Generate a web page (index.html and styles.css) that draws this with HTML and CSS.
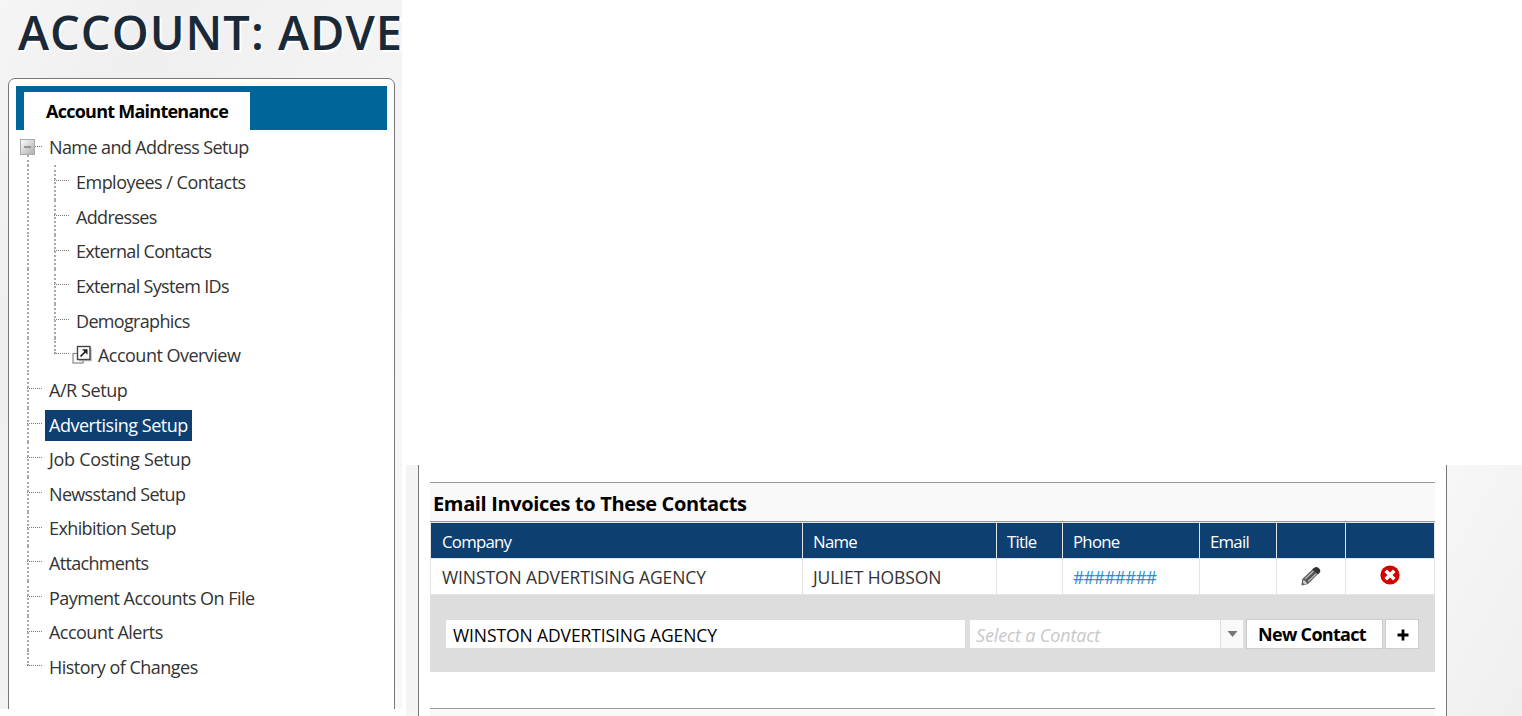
FILE: index.html
```
<!DOCTYPE html>
<html lang="en">
<head>
<meta charset="utf-8">
<title>Account Maintenance</title>
<link rel="stylesheet" href="styles.css">
</head>
<body>
<aside class="side">
  <h1 class="title">ACCOUNT: ADVE</h1>
  <nav class="panel">
    <div class="tabs"><div class="tab">Account Maintenance</div></div>
    <ul class="tree">
      <li class="node root"><svg class="toggle" viewBox="0 0 15 16"><defs><linearGradient id="g" x1="0" y1="0" x2="1" y2="1"><stop offset="0" stop-color="#fff"/><stop offset="1" stop-color="#aaa"/></linearGradient></defs><rect x=".5" y=".5" width="14" height="15" fill="url(#g)" stroke="#aaa"/><path d="M4 8h7" stroke="#777" stroke-width="1.4"/></svg><span class="label snug">Name and Address Setup</span></li>
      <li class="node child"><span class="label">Employees / Contacts</span></li>
      <li class="node child"><span class="label tight">Addresses</span></li>
      <li class="node child"><span class="label tight">External Contacts</span></li>
      <li class="node child"><span class="label tight">External System IDs</span></li>
      <li class="node child"><span class="label tight">Demographics</span></li>
      <li class="node child last"><svg class="open" viewBox="0 0 20 20"><rect x="1" y="8.500" width="10" height="9.500" fill="#fff" stroke="#888" stroke-width="1.200"/><path d="M19 3v12.500H7" fill="none" stroke="#bbb" stroke-width="1.500"/><rect x="5.500" y="1.500" width="12.500" height="13" fill="#fff" stroke="#444" stroke-width="1.400"/><path d="M8.500 11.500l5-5" stroke="#222" stroke-width="1.700"/><path d="M10 4.200h5.500v5.500z" fill="#222"/></svg><span class="label">Account Overview</span></li>
      <li class="node"><span class="label wide">A/R Setup</span></li>
      <li class="node"><span class="label selected">Advertising Setup</span></li>
      <li class="node"><span class="label wider">Job Costing Setup</span></li>
      <li class="node"><span class="label tight">Newsstand Setup</span></li>
      <li class="node"><span class="label snug">Exhibition Setup</span></li>
      <li class="node"><span class="label tight">Attachments</span></li>
      <li class="node"><span class="label">Payment Accounts On File</span></li>
      <li class="node"><span class="label">Account Alerts</span></li>
      <li class="node end"><span class="label">History of Changes</span></li>
    </ul>
  </nav>
</aside>
<main class="main">
  <div class="sheet">
    <h2 class="section">Email Invoices to These Contacts</h2>
    <div class="grid head">
      <div>Company</div><div>Name</div><div>Title</div><div>Phone</div><div>Email</div><div></div><div></div>
    </div>
    <div class="grid row">
      <div class="caps">WINSTON ADVERTISING AGENCY</div><div class="caps">JULIET HOBSON</div><div></div><div class="phone">########</div><div></div>
      <div class="icon"><svg class="pencil" viewBox="0 0 20 20"><path d="M.5 19.500l.8-6.500L13 2l5 5L7 18z" fill="#555"/><path d="M13 2q2-2 4.800 0 2.200 2 1.400 4l-2 2.300-6-5z" fill="#333"/><path d="M4 13L12.500 5M7 15.500L15.500 7.500" stroke="#bbb" stroke-width="1.200"/><path d="M2.500 13.500l4 4-3.200.8-1.500-1.500z" fill="#ccc"/></svg></div>
      <div class="icon"><svg class="remove" viewBox="0 0 20 20"><circle cx="10" cy="10" r="9.600" fill="#d40000"/><path d="M5.700 5.700l8.600 8.600M14.300 5.700l-8.600 8.600" stroke="#fff" stroke-width="3.600"/></svg></div>
    </div>
    <div class="form">
      <div class="field company caps">WINSTON ADVERTISING AGENCY</div>
      <div class="field contact"><span class="hint">Select a Contact</span><span class="drop"><svg viewBox="0 0 10 6"><path d="M0 0h10L5 6z" fill="#777"/></svg></span></div>
      <div class="button new">New Contact</div>
      <div class="button add"><svg viewBox="0 0 12 12"><path d="M6 .5v11M.5 6h11" stroke="#000" stroke-width="2.800"/></svg></div>
    </div>
    <div class="next"></div>
  </div>
</main>
</body>
</html>
```
FILE: styles.css
```
* { box-sizing: border-box; }
body { margin: 0; width: 1522px; height: 716px; display: flex; gap: 4px; overflow: hidden; background: #fff; color: #333; font: 18px/30px "Open Sans", "Noto Sans", sans-serif; }
svg { display: block; }
.side { width: 402px; height: 709px; padding-left: 8px; overflow: hidden; background: linear-gradient(115deg, #f5f5f5 0, #efefef 22%, #f3f3f3 50%, #f8f8f8 100%); }
.title { margin: 0; height: 78px; padding-left: 10px; white-space: nowrap; font-size: 47px; line-height: 64px; font-weight: 600; letter-spacing: 1px; color: #1a2938; text-shadow: 2px 2px 0 #fff; }
.panel { width: 387px; height: 650px; border: 1px solid #777; border-radius: 7px; background: #fff; padding: 7px; }
.tabs { height: 44px; background: #006699; padding: 6px 0 0 8px; }
.tab { width: 226px; height: 38px; padding-left: 22px; background: #fff; color: #000; font-weight: 700; line-height: 39px; letter-spacing: -.75px; white-space: nowrap; }
.tree { list-style: none; margin: 0; padding: .6px 0 0 11px; }
.node { position: relative; height: 34.65px; display: flex; align-items: center; padding-left: 18px; white-space: nowrap; }
.node::before { content: ""; position: absolute; left: 0; top: 0; height: 100%; border-left: 2px dotted #aaa; }
.node::after { content: ""; position: absolute; left: 0; top: 15px; width: 15px; border-top: 1px dotted #777; }
.root::before { top: 24px; height: 11px; }
.end::before { height: 16px; }
/* Nested rows keep the outer connector and add their own. */
.child { padding-left: 45px; background: repeating-linear-gradient(#aaa 0 2px, #fff 2px 4px) 0 0 / 2px 100% no-repeat; }
.child::before, .child::after { left: 27px; }
.last { padding-left: 45px; }
.last::before { height: 16px; }
.toggle { position: absolute; z-index: 1; left: -7px; top: 8px; width: 15px; height: 16px; }
.open { width: 20px; height: 20px; margin: -2px 2px 0 0; }
.label { height: 31px; line-height: 31px; padding: 0 4px; letter-spacing: -.52px; }
.snug { letter-spacing: -.6px; }
.tight { letter-spacing: -.67px; }
.wide { letter-spacing: -.43px; }
.wider { letter-spacing: -.3px; }
.selected { background: #0d4071; color: #fff; letter-spacing: -.47px; }
.main { width: 1116px; height: 251px; margin-top: 465px; padding-left: 12px; background: linear-gradient(120deg, #f4f4f4 0, #f8f8f8 70%, #f7f7f7 82%, #efefef 100%); }
.sheet { width: 1029px; height: 251px; padding: 17px 11px 0; background: #fff; border: solid #777; border-width: 0 1px; }
.section { margin: 0; height: 40px; padding-left: 3px; border: solid #999; border-width: 1px 0; background: #f9f9f9; color: #000; font-size: 20px; line-height: 41px; font-weight: 700; letter-spacing: -.35px; white-space: nowrap; }
.grid { display: grid; grid-template-columns: 372px 194px 66px 137px 77px 69px 89px; border-left: 1px solid #e4e4e4; }
.grid > div { border-right: 1px solid #e4e4e4; padding-left: 11px; white-space: nowrap; }
.grid > div:nth-child(n+2) { padding-left: 10px; }
.head { border-top: 1px solid #e4e4e4; background: #0d4071; color: #fff; font-size: 16.8px; letter-spacing: -.75px; line-height: 37px; height: 36px; }
.row { height: 37px; border-top: 1px solid #e4e4e4; border-bottom: 1px solid #e4e4e4; line-height: 36px; }
.caps { font-size: 17.5px; letter-spacing: -.1px; }
.phone { color: #2a8fcf; font-size: 17.5px; letter-spacing: -.9px; }
.grid > .icon:nth-child(n+2) { padding: 0; display: flex; justify-content: center; }
.pencil { width: 20px; height: 20px; margin-top: 7px; }
.remove { width: 20px; height: 20px; margin-top: 6px; }
.form { height: 77px; background: #ddd; padding: 24px 16px 0; display: flex; }
.field { height: 28px; margin-top: 1px; background: #fff; line-height: 30px; white-space: nowrap; overflow: hidden; }
.company { width: 519px; padding-left: 7px; margin-right: 5px; color: #000; }
.contact { width: 273px; margin-right: 3px; display: flex; justify-content: space-between; }
.hint { padding-left: 6px; color: #c8c8c8; font-style: italic; letter-spacing: -.15px; }
.drop { width: 23px; border-left: 1px solid #ddd; background: #f9f9f9; padding: 11px 0 0 6px; }
.drop svg { width: 11px; height: 6px; }
.button { height: 30px; border: 1px solid #ccc; background: #fff; color: #000; font-weight: 700; display: flex; align-items: center; justify-content: center; letter-spacing: -.7px; white-space: nowrap; }
.new { width: 137px; margin-right: 2px; padding-right: 5px; line-height: 31px; }
.add { width: 34px; }
.add svg { width: 12px; height: 12px; margin: 2px 0 0 1px; }
.next { margin-top: 36px; height: 8px; border-top: 1px solid #999; background: #f9f9f9; }
```
